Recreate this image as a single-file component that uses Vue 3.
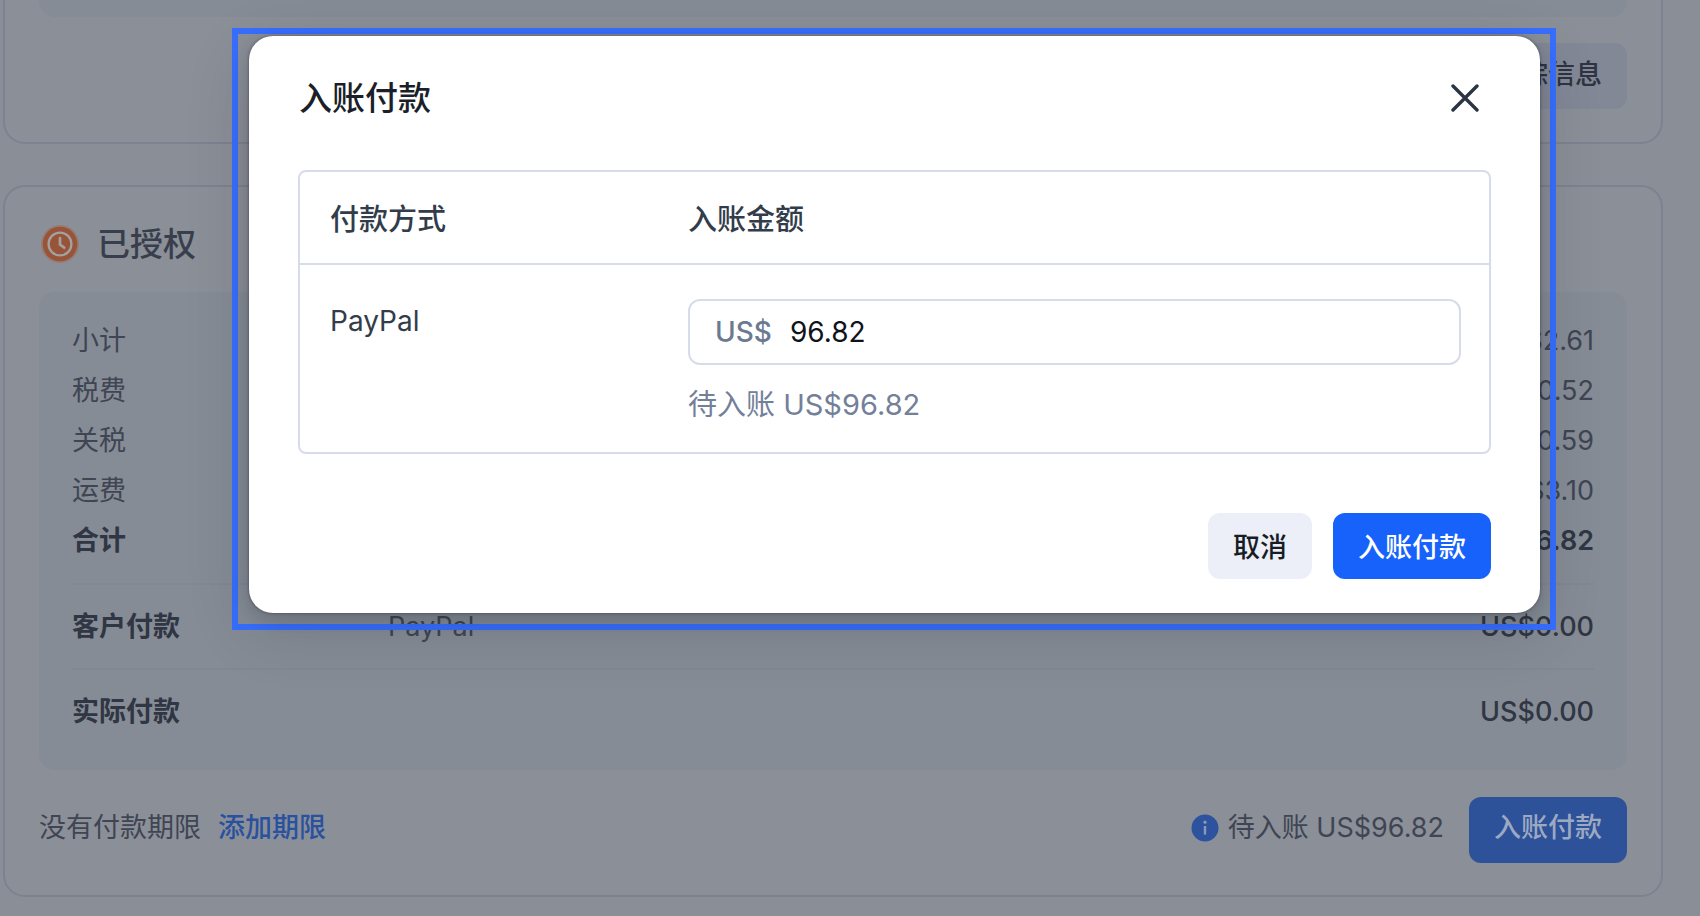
<script setup>
import { ref } from 'vue'

const amount = ref('96.82')
const lines = [
  { label: '小计', value: 'US$2.61' },
  { label: '税费', value: 'US$90.52' },
  { label: '关税', value: 'US$0.59' },
  { label: '运费', value: 'US$3.10' },
  { label: '合计', value: 'US$96.82', total: true },
]
</script>

<template>
  <div class="page">
    <section class="card card-top">
      <div class="panel-end"></div>
      <button type="button" class="btn muted">添加跟踪信息</button>
    </section>

    <section class="card order">
      <h2 class="status">
        <svg width="38" height="38" viewBox="0 0 36 36" aria-hidden="true">
          <circle cx="18" cy="18" r="18" fill="#967c72" />
          <circle cx="18" cy="18" r="16.4" fill="#975438" />
          <circle cx="18" cy="18" r="10.8" fill="none" stroke="#a3a09f" stroke-width="2.2" />
          <path d="M18 12.5v6l4 3" fill="none" stroke="#a3a09f" stroke-width="2.6" stroke-linecap="round" />
        </svg>
        已授权
      </h2>

      <div class="summary">
        <dl class="lines">
          <div v-for="l in lines" :key="l.label" class="line" :class="{ total: l.total }">
            <dt>{{ l.label }}</dt>
            <dd>{{ l.value }}</dd>
          </div>
        </dl>
        <div class="pay">
          <strong>客户付款</strong><span class="method">PayPal</span><span>US$0.00</span>
        </div>
        <div class="pay">
          <strong>实际付款</strong><span></span><span>US$0.00</span>
        </div>
      </div>

      <footer class="foot">
        <div class="note">
          <span>没有付款期限</span>
          <a href="#">添加期限</a>
        </div>
        <div class="pending">
          <svg width="28" height="28" viewBox="0 0 28 28" aria-hidden="true">
            <circle cx="14" cy="14" r="13.5" fill="#2d539f" />
            <circle cx="14" cy="8.2" r="1.6" fill="#8d98b5" />
            <path d="M14 12v8.6" stroke="#8d98b5" stroke-width="2.4" />
          </svg>
          待入账 US$96.82
        </div>
        <button type="button" class="btn dim">入账付款</button>
      </footer>
    </section>

    <div class="overlay">
      <div class="frame">
        <div class="modal" role="dialog" aria-modal="true" aria-labelledby="dlg-title">
          <header class="head">
            <h1 id="dlg-title">入账付款</h1>
            <button type="button" class="close" aria-label="关闭">
              <svg width="28" height="28" viewBox="0 0 28 28" aria-hidden="true">
                <path d="M2 2l24 24M26 2L2 26" stroke="#2b3442" stroke-width="3.4" stroke-linecap="round" />
              </svg>
            </button>
          </header>

          <table class="grid">
            <thead>
              <tr>
                <th scope="col">付款方式</th>
                <th scope="col" id="amount-label">入账金额</th>
              </tr>
            </thead>
            <tbody>
              <tr>
                <td class="name">PayPal</td>
                <td>
                  <label class="field">
                    <span>US$</span>
                    <input v-model="amount" type="text" aria-labelledby="amount-label" />
                  </label>
                  <p class="hint">待入账 US$96.82</p>
                </td>
              </tr>
            </tbody>
          </table>

          <div class="actions">
            <button type="button" class="btn cancel">取消</button>
            <button type="button" class="btn primary">入账付款</button>
          </div>
        </div>
      </div>
    </div>
  </div>
</template>

<style>
body {
  background: #8a8e97;
}
</style>

<style scoped>
* {
  box-sizing: border-box;
}
.page {
  position: relative;
  min-height: 100vh;
  padding: 0 37px 19px 3px;
  font-family: Inter, 'Noto Sans CJK SC', sans-serif;
  font-size: 27px;
  line-height: 40px;
  color: #3f4553;
  background: #8a8e97;
}
.card {
  border: 2px solid #7d8291;
  border-radius: 22px;
  background: #8b8f98;
  padding: 0 34px;
}
.card-top {
  height: 144px;
  border-top: 0;
  border-top-left-radius: 0;
  border-top-right-radius: 0;
  display: flex;
  flex-direction: column;
  align-items: flex-end;
  gap: 26px;
}
.panel-end {
  align-self: stretch;
  height: 17px;
  border-radius: 0 0 16px 16px;
  background: #858c95;
}
.btn {
  height: 66px;
  border: 0;
  border-radius: 12px;
  padding: 0 25px;
  font: inherit;
  font-weight: 500;
  white-space: nowrap;
}
.muted {
  background: #828896;
  color: #2e3441;
  padding-bottom: 2px;
}
.order {
  margin-top: 41px;
  padding-bottom: 32px;
}
.status {
  display: flex;
  align-items: center;
  gap: 18px;
  height: 64px;
  margin: 25px 0 16px 2px;
  font-size: 33px;
  font-weight: 500;
  color: #383e4b;
}
.summary {
  padding: 24px 33px 17px;
  border-radius: 16px;
  background: #858c95;
}
.lines {
  margin: 0;
  padding-bottom: 17px;
}
.line {
  display: flex;
  justify-content: space-between;
  line-height: 50px;
}
dd {
  margin: 0;
}
.total {
  font-weight: 600;
  color: #303643;
}
.pay {
  display: grid;
  grid-template-columns: 316px 1fr auto;
  align-items: center;
  height: 85px;
  border-top: 2px solid #818892;
  font-weight: 500;
  color: #303643;
}
.pay strong {
  font-weight: 600;
}
.method {
  font-weight: 400;
  color: #3f4553;
}
.foot {
  display: flex;
  align-items: center;
  margin-top: 27px;
}
.note,
.pending {
  display: flex;
  align-items: center;
  padding-bottom: 4px;
}
.note {
  gap: 17px;
}
.foot a {
  font-weight: 500;
  color: #29519f;
  text-decoration: none;
}
.pending {
  gap: 9px;
  margin: 0 25px 0 auto;
}
.dim {
  background: #2d5299;
  color: #9da9c2;
  padding-bottom: 4px;
}
.overlay {
  position: absolute;
  inset: 0;
  padding: 28px 144px 0 232px;
}
.frame {
  border: 6px solid #376fff;
  padding: 2px 10px 11px 11px;
}
.modal {
  padding: 33px 49px 34px;
  border-radius: 24px;
  background: #fff;
  box-shadow: 0 0 3px rgba(20, 24, 36, 0.5), 0 16px 64px rgba(20, 24, 36, 0.16), 0 6px 16px rgba(20, 24, 36, 0.14);
}
.head {
  display: flex;
  justify-content: space-between;
  align-items: center;
  height: 58px;
}
h1 {
  margin: 0 1px;
  font-size: 33px;
  font-weight: 500;
  color: #1b1f29;
}
.close {
  display: flex;
  padding: 12px;
  border: 0;
  background: none;
}
.grid {
  width: 100%;
  margin: 43px 0 59px;
  border: 2px solid #d8dcea;
  border-radius: 8px;
  border-spacing: 0;
  table-layout: fixed;
  font-size: 29px;
  color: #323c4b;
}
th {
  height: 93px;
  padding: 4px 30px 0;
  border-bottom: 2px solid #d8dcea;
  text-align: left;
  font-weight: 500;
}
th:first-child {
  width: 358px;
}
td {
  padding: 34px 28px 27px 30px;
  vertical-align: top;
}
.name {
  font-size: 28px;
  padding-top: 36px;
}
.field {
  display: flex;
  align-items: center;
  gap: 18px;
  height: 66px;
  padding: 0 25px;
  border: 2px solid #d8dcea;
  border-radius: 12px;
  font-size: 28px;
  color: #6c7a91;
}
.field span {
  font-weight: 500;
}
.field input {
  flex: 1;
  min-width: 0;
  padding: 0;
  border: 0;
  outline: 0;
  background: none;
  font: inherit;
  color: #10131b;
}
.hint {
  margin: 20px 0 0;
  color: #73809a;
}
.actions {
  display: flex;
  justify-content: flex-end;
  gap: 21px;
}
.actions .btn {
  padding-top: 3px;
}
.cancel {
  background: #eceff8;
  color: #181c25;
}
.primary {
  background: #1762fb;
  color: #fff;
}
</style>
